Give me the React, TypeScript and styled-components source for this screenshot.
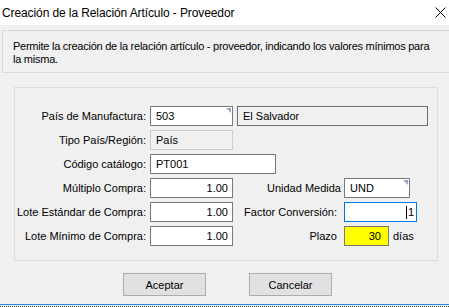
import React from "react";
import styled, { createGlobalStyle } from "styled-components";

const Global = createGlobalStyle`
  html, body { margin: 0; padding: 0; background: #f0f0f0; }
  body { font-family: "Liberation Sans", Arial, sans-serif; font-size: 11px; color: #000; overflow: hidden; }
`;

const Window = styled.div`
  width: 449px;
  height: 307px;
  display: flex;
  flex-direction: column;
  background: #f0f0f0;
  overflow: hidden;
`;

const TitleBar = styled.div`
  height: 25px;
  background: #fff;
  display: flex;
  align-items: center;
  justify-content: space-between;
  padding-left: 2px;
  flex-shrink: 0;
`;

const Title = styled.span`
  font-family: "Liberation Sans", Arial, sans-serif;
  font-size: 12px;
  letter-spacing: -0.1px;
  color: #000;
`;

const CloseBtn = styled.div`
  width: 24px;
  height: 25px;
  display: flex;
  align-items: center;
  justify-content: center;
  margin-right: -3px;
`;

const DescBox = styled.div`
  margin: 5px -4px 0 2px;
  height: 43px;
  box-sizing: border-box;
  border: 1px solid #d9d9d9;
  padding: 9px 0 0 10px;
  line-height: 13px;
  letter-spacing: -0.25px;
  white-space: nowrap;
`;

const GroupBox = styled.div`
  margin: 14px 0 0 14px;
  width: 424px;
  height: 174px;
  box-sizing: border-box;
  border: 1px solid #dcdcdc;
  padding-top: 18px;
  display: grid;
  grid-auto-rows: 20px;
  row-gap: 4px;
`;

const Row = styled.div`
  display: flex;
  align-items: center;
  height: 20px;
`;

const Label = styled.div<{ $w: number; $pad?: number }>`
  width: ${(p) => p.$w}px;
  padding-right: ${(p) => p.$pad ?? 4}px;
  box-sizing: border-box;
  text-align: right;
  white-space: nowrap;
  flex-shrink: 0;
`;

const Field = styled.div<{
  $w: number;
  $kind?: "edit" | "readonly" | "display" | "focus" | "yellow";
  $align?: "left" | "right";
  $pr?: number;
  $ml?: number;
}>`
  position: relative;
  width: ${(p) => p.$w}px;
  height: 20px;
  margin-left: ${(p) => p.$ml ?? 0}px;
  box-sizing: border-box;
  flex-shrink: 0;
  display: flex;
  align-items: center;
  justify-content: ${(p) => (p.$align === "right" ? "flex-end" : "flex-start")};
  padding-left: 5px;
  padding-right: ${(p) => p.$pr ?? 4}px;
  white-space: nowrap;
  background: ${(p) =>
    p.$kind === "readonly" || p.$kind === "display"
      ? "#f0f0f0"
      : p.$kind === "yellow"
      ? "#ffff00"
      : "#fff"};
  border: 1px solid
    ${(p) =>
      p.$kind === "readonly"
        ? "#cccccc"
        : p.$kind === "focus"
        ? "#0078d7"
        : p.$kind === "display"
        ? "#6d6d6d"
        : "#7a7a7a"};
`;

const Corner = styled.span`
  position: absolute;
  top: 1px;
  right: 1px;
  width: 0;
  height: 0;
  border-top: 5px solid #93a9c8;
  border-left: 5px solid transparent;
`;

const Caret = styled.span`
  display: inline-block;
  width: 1px;
  height: 13px;
  background: #000;
  margin-right: 1px;
`;

const Suffix = styled.span`
  margin-left: 4px;
`;

const ButtonBar = styled.div`
  display: flex;
  margin: 12px 0 0 123px;
  gap: 43px;
`;

const Button = styled.button`
  width: 83px;
  height: 23px;
  box-sizing: border-box;
  background: #e1e1e1;
  border: 1px solid #adadad;
  font-family: "Liberation Sans", Arial, sans-serif;
  font-size: 11px;
  color: #000;
  padding: 0;
`;

const BlueLine = styled.div`
  margin-top: 8px;
  height: 1px;
  background: #2b87d8;
`;

const DotLine = styled.div`
  margin-top: 1px;
  height: 0;
  border-top: 1px dotted #444;
`;

export default function App() {
  return (
    <Window>
      <Global />
      <TitleBar>
        <Title>Creación de la Relación Artículo - Proveedor</Title>
        <CloseBtn>
          <svg width="11" height="11" viewBox="0 0 11 11">
            <path d="M0.5 0.5 L10.5 10.5 M10.5 0.5 L0.5 10.5" stroke="#000" strokeWidth="1" />
          </svg>
        </CloseBtn>
      </TitleBar>
      <DescBox>
        Permite la creación de la relación artículo - proveedor, indicando los valores mínimos para
        <br />
        la misma.
      </DescBox>
      <GroupBox>
        <Row>
          <Label $w={135}>País de Manufactura:</Label>
          <Field $w={83}>
            503
            <Corner />
          </Field>
          <Field $w={191} $kind="display" $ml={4}>
            El Salvador
          </Field>
        </Row>
        <Row>
          <Label $w={135}>Tipo País/Región:</Label>
          <Field $w={83} $kind="readonly">
            País
          </Field>
        </Row>
        <Row>
          <Label $w={135}>Código catálogo:</Label>
          <Field $w={126}>PT001</Field>
        </Row>
        <Row>
          <Label $w={135}>Múltiplo Compra:</Label>
          <Field $w={83} $align="right">
            1.00
          </Field>
          <Label $w={111} $pad={3}>Unidad Medida</Label>
          <Field $w={66}>
            UND
            <Corner />
          </Field>
        </Row>
        <Row>
          <Label $w={135}>Lote Estándar de Compra:</Label>
          <Field $w={83} $align="right">
            1.00
          </Field>
          <Label $w={111} $pad={7}>Factor Conversión:</Label>
          <Field $w={73} $kind="focus" $align="right" $pr={2}>
            <Caret />1
          </Field>
        </Row>
        <Row>
          <Label $w={135}>Lote Mínimo de Compra:</Label>
          <Field $w={83} $align="right">
            1.00
          </Field>
          <Label $w={111} $pad={7}>Plazo</Label>
          <Field $w={45} $kind="yellow" $align="right" $pr={7}>
            30
          </Field>
          <Suffix>días</Suffix>
        </Row>
      </GroupBox>
      <ButtonBar>
        <Button>Aceptar</Button>
        <Button>Cancelar</Button>
      </ButtonBar>
      <BlueLine />
      <DotLine />
    </Window>
  );
}
